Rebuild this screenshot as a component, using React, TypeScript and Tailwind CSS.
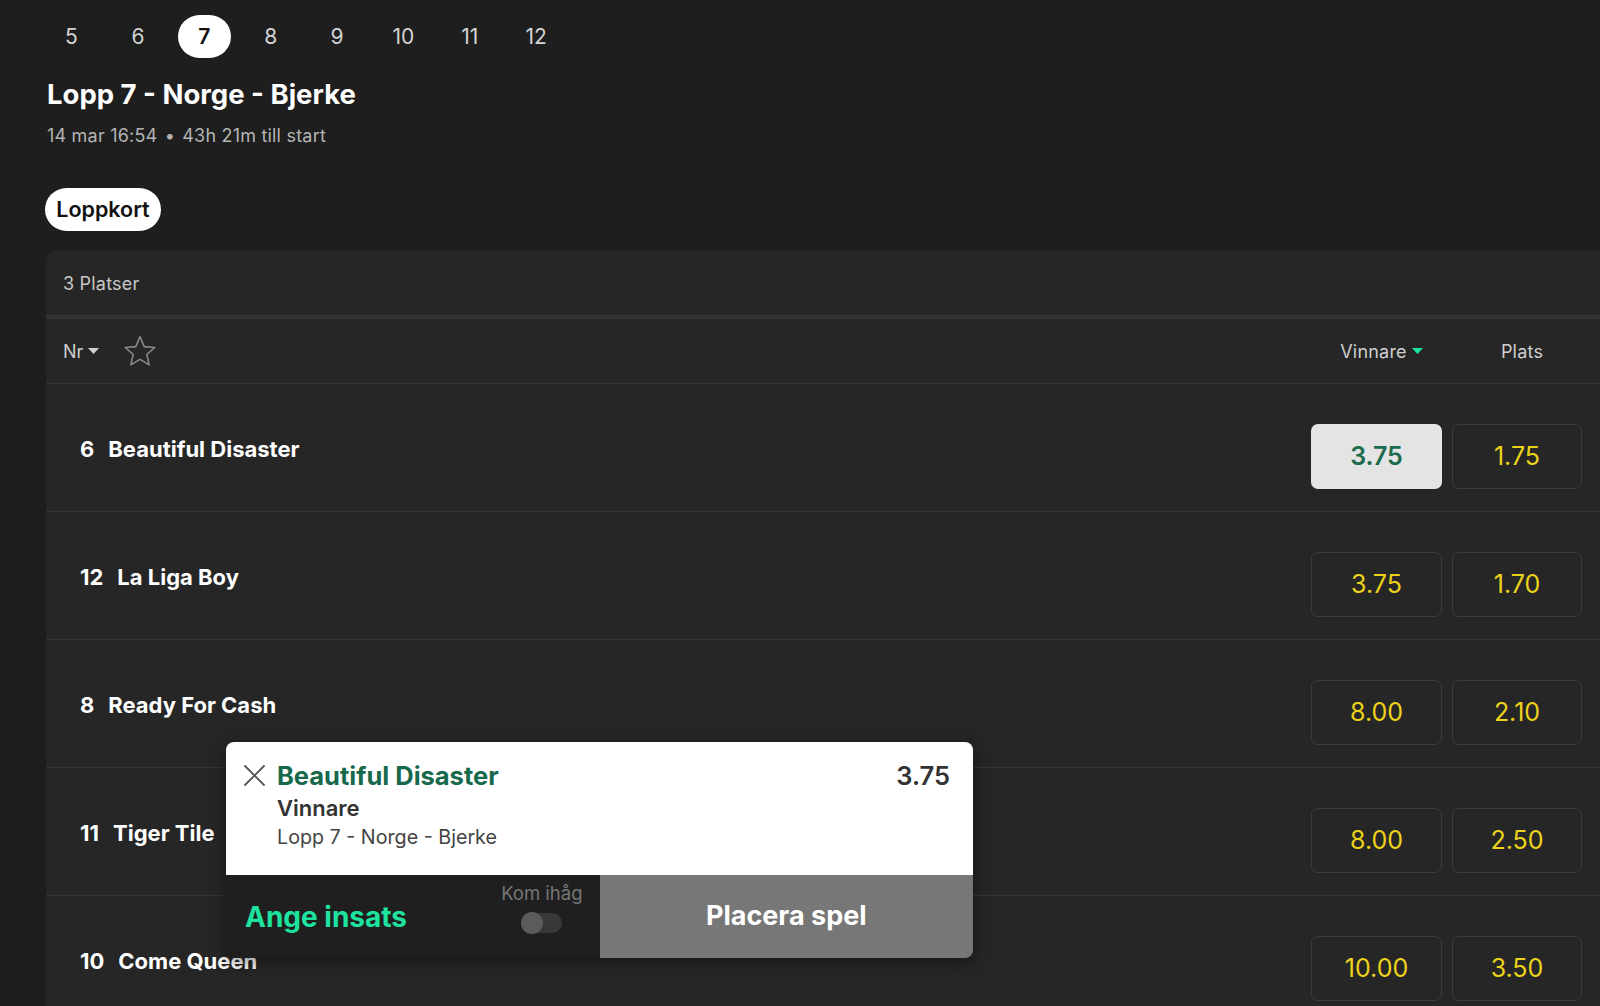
const races = [5, 6, 7, 8, 9, 10, 11, 12];

const runners = [
  { nr: 6, name: "Beautiful Disaster", win: "3.75", place: "1.75", selected: true },
  { nr: 12, name: "La Liga Boy", win: "3.75", place: "1.70" },
  { nr: 8, name: "Ready For Cash", win: "8.00", place: "2.10" },
  { nr: 11, name: "Tiger Tile", win: "8.00", place: "2.50" },
  { nr: 10, name: "Come Queen", win: "10.00", place: "3.50" },
];

function Caret({ className }: { className: string }) {
  return (
    <svg width="11" height="6" viewBox="0 0 11 6" className={className}>
      <path d="M0 0 H11 L5.5 6 Z" fill="currentColor" />
    </svg>
  );
}

function StarOutline() {
  return (
    <svg width="34" height="32" viewBox="0 0 34 32" fill="none">
      <path
        d="M17 1.8 L21.2 11.6 L31.8 12.5 L23.8 19.5 L26.2 29.9 L17 24.4 L7.8 29.9 L10.2 19.5 L2.2 12.5 L12.8 11.6 Z"
        stroke="#8a8a8a"
        strokeWidth="1.6"
        strokeLinejoin="round"
      />
    </svg>
  );
}

function CloseIcon() {
  return (
    <svg width="21" height="21" viewBox="0 0 21 21" className="shrink-0">
      <path d="M1 1 L20 20 M20 1 L1 20" stroke="#555" strokeWidth="1.8" strokeLinecap="round" />
    </svg>
  );
}

function OddsButton({ value, selected }: { value: string; selected?: boolean }) {
  return (
    <div
      className={
        selected
          ? "flex h-[65px] items-center justify-center rounded-[7px] bg-[#e4e4e4] text-[25px] font-semibold text-[#1c6b4f]"
          : "flex h-[65px] items-center justify-center rounded-[7px] border border-[#3b3b3b] text-[25px] text-[#ecd21a]"
      }
    >
      {value}
    </div>
  );
}

function BetSlip() {
  return (
    <div className="absolute left-[226px] top-[742px] w-[747px] overflow-hidden rounded-[8px] shadow-[0_4px_18px_rgba(0,0,0,0.45)]">
      <div className="flex h-[133px] bg-white pl-[18px] pr-[23px] pt-[19px]">
        <div className="mt-[4px]">
          <CloseIcon />
        </div>
        <div className="ml-[12px] flex-1">
          <div className="text-[25.5px] font-bold leading-[30px] text-[#17694c]">Beautiful Disaster</div>
          <div className="mt-[5px] text-[22px] font-semibold leading-[25px] text-[#333]">Vinnare</div>
          <div className="mt-[4px] text-[19.7px] leading-[25px] text-[#444]">Lopp 7 - Norge - Bjerke</div>
        </div>
        <div className="text-[25.5px] font-semibold leading-[30px] text-[#333]">3.75</div>
      </div>
      <div className="grid h-[83px] grid-cols-2">
        <div className="flex items-center justify-between bg-[#1f1f1f] pl-[19px] pr-[17px]">
          <span className="text-[28px] font-bold text-[#1ee39f]">Ange insats</span>
          <div className="flex flex-col items-center self-start pt-[7px]">
            <span className="text-[18.5px] leading-[22px] text-[#767676]">Kom ihåg</span>
            <div className="relative mt-[9px] h-[20px] w-[41px] rounded-full bg-[#383838]">
              <div className="absolute -top-[1px] left-0 h-[22px] w-[22px] rounded-full bg-[#5b5b5b]" />
            </div>
          </div>
        </div>
        <div className="flex items-center justify-center bg-[#777777] text-[27px] font-bold text-white">
          Placera spel
        </div>
      </div>
    </div>
  );
}

export default function App() {
  return (
    <div className="relative h-[1006px] w-full overflow-hidden bg-[#1e1e1e] font-['Inter','Liberation_Sans',sans-serif] text-white">
      <div className="flex gap-[13.4px] pl-[45px] pt-[15px]">
        {races.map((r) => (
          <div
            key={r}
            className={
              r === 7
                ? "flex h-[43px] w-[53px] items-center justify-center rounded-full bg-white text-[21px] font-semibold text-[#111]"
                : "flex h-[43px] w-[53px] items-center justify-center text-[21px] text-[#d4d4d4]"
            }
          >
            {r}
          </div>
        ))}
      </div>

      <h1 className="ml-[47px] mt-[19px] text-[27.5px] font-bold leading-[34px]">Lopp 7 - Norge - Bjerke</h1>
      <p className="ml-[47px] mt-[14px] text-[18px] leading-[22px] tracking-[0.2px] text-[#b4b4b4]">
        14 mar 16:54 <span className="mx-[2px]">•</span> 43h 21m till start
      </p>

      <div className="ml-[45px] mt-[41px] flex h-[43px] w-[116px] items-center justify-center rounded-full bg-white text-[21.5px] font-semibold text-[#111]">
        Loppkort
      </div>

      <div className="ml-[46px] mt-[20px] min-h-[760px] rounded-tl-[10px] bg-[#262626]">
        <div className="flex h-[64px] items-center pl-[17px] text-[18px] tracking-[0.2px] text-[#c8c8c8]">3 Platser</div>
        <div className="h-[4px] bg-[#333333]" />
        <div className="flex h-[65px] items-center border-b border-[#363636] pl-[17px] pr-[13px]">
          <span className="text-[18px] text-[#cfcfcf]">Nr</span>
          <Caret className="ml-[5px] text-[#cfcfcf]" />
          <div className="ml-[24px]">
            <StarOutline />
          </div>
          <div className="ml-auto grid grid-cols-[131px_130px] gap-[10px]">
            <div className="flex items-center justify-center text-[18px] tracking-[0.2px] text-[#cfcfcf]">
              Vinnare
              <Caret className="ml-[5px] text-[#1ee39f]" />
            </div>
            <div className="flex items-center justify-center text-[18px] tracking-[0.2px] text-[#cfcfcf]">Plats</div>
          </div>
        </div>

        {runners.map((r) => (
          <div key={r.nr} className="flex h-[128px] items-start border-b border-[#363636] pl-[34px] pr-[18px]">
            <div className="mt-[51px] flex gap-[14px] text-[22px] font-bold leading-[28px]">
              <span>{r.nr}</span>
              <span>{r.name}</span>
            </div>
            <div className="ml-auto mt-[40px] grid grid-cols-[131px_130px] gap-[10px]">
              <OddsButton value={r.win} selected={r.selected} />
              <OddsButton value={r.place} />
            </div>
          </div>
        ))}
      </div>

      <BetSlip />
    </div>
  );
}
